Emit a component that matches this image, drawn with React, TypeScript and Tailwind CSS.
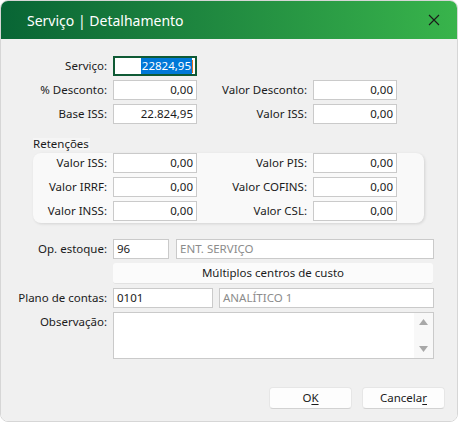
import React from 'react';

const font = { fontFamily: '"Noto Sans", "Open Sans", sans-serif' };

function Input({ value, className = '', muted = false, align = 'right' }: { value: string; className?: string; muted?: boolean; align?: 'left' | 'right' }) {
  return (
    <div
      className={`h-[20px] bg-white border border-[#cacaca] flex items-center px-[3px] text-[11.5px] leading-none ${
        align === 'right' ? 'justify-end' : 'justify-start'
      } ${muted ? 'text-[#8c8c8c]' : 'text-[#1b1b1b]'} ${className}`}
    >
      {value}
    </div>
  );
}

function Label({ text, className = '' }: { text: string; className?: string }) {
  return <div className={`text-right pr-[6px] text-[11.5px] text-[#1b1b1b] whitespace-nowrap ${className}`}>{text}</div>;
}

function Pair({ label, value, rightLabel, rightValue, leftWidth = 'w-[112px]' }: { label: string; value: string; rightLabel?: string; rightValue?: string; leftWidth?: string }) {
  return (
    <div className="flex items-center h-[20px]">
      <Label text={label} className={leftWidth} />
      <Input value={value} className="w-[84px]" />
      {rightLabel && (
        <>
          <Label text={rightLabel} className="w-[116px]" />
          <Input value={rightValue || ''} className="w-[84px]" />
        </>
      )}
    </div>
  );
}

export default function App() {
  return (
    <div className="w-[459px] h-[423px] bg-white" style={font}>
      <div className="w-[458px] h-[422px] rounded-lg overflow-hidden flex flex-col border border-[#d6d6d6]">
        {/* Title bar */}
        <div className="h-[38px] flex items-center justify-between bg-gradient-to-r from-[#086535] to-[#38b44b] pl-[26px] pr-[17px]">
          <span className="text-white text-[14px]">Serviço | Detalhamento</span>
          <svg width="12" height="12" viewBox="0 0 12 12">
            <path d="M1 1 L11 11 M11 1 L1 11" stroke="#1a1a1a" strokeWidth="1.1" />
          </svg>
        </div>

        {/* Body */}
        <div className="flex-1 bg-[#f0f0f0] pt-[17px] flex flex-col">
          {/* Top values */}
          <div className="flex flex-col gap-[4px]">
            <div className="flex items-center h-[20px]">
              <Label text="Serviço:" className="w-[112px]" />
              <div className="w-[84px] h-[20px] bg-white border-2 border-[#0f5a35] flex items-center justify-end pr-[2px] text-[11.5px] leading-none">
                <span className="bg-[#0078d7] text-white px-[1px] py-[2px]">22824,95</span>
                <span className="w-[1px] h-[13px] bg-[#e0701f]"></span>
              </div>
            </div>
            <Pair label="% Desconto:" value="0,00" rightLabel="Valor Desconto:" rightValue="0,00" />
            <Pair label="Base ISS:" value="22.824,95" rightLabel="Valor ISS:" rightValue="0,00" />
          </div>

          {/* Retenções */}
          <div className="mt-[14px] ml-[32px] w-fit bg-[#f5f5f5] text-[11.5px] leading-[12px] text-[#1b1b1b] pr-[1px]">Retenções</div>
          <div className="mt-[3px] ml-[32px] w-[391px] h-[70px] bg-[#f9f9f9] rounded-lg shadow-[1px_1px_3px_rgba(0,0,0,0.12)] flex flex-col gap-[4px]">
            <Pair label="Valor ISS:" value="0,00" rightLabel="Valor PIS:" rightValue="0,00" leftWidth="w-[80px]" />
            <Pair label="Valor IRRF:" value="0,00" rightLabel="Valor COFINS:" rightValue="0,00" leftWidth="w-[80px]" />
            <Pair label="Valor INSS:" value="0,00" rightLabel="Valor CSL:" rightValue="0,00" leftWidth="w-[80px]" />
          </div>

          {/* Lower section */}
          <div className="mt-[16px] flex flex-col gap-[4px]">
            <div className="flex items-center h-[20px]">
              <Label text="Op. estoque:" className="w-[112px]" />
              <Input value="96" className="w-[56px]" align="left" />
              <Input value="ENT. SERVIÇO" className="w-[258px] ml-[7px]" muted align="left" />
            </div>
            <div className="flex">
              <div className="w-[112px]" />
              <div className="w-[320px] h-[21px] bg-[#fbfbfb] rounded-[3px] border-b border-[#e2e2e2] flex items-center justify-center text-[11.5px] text-[#1b1b1b]">
                Múltiplos centros de custo
              </div>
            </div>
            <div className="flex items-center h-[20px]">
              <Label text="Plano de contas:" className="w-[112px]" />
              <Input value="0101" className="w-[100px]" align="left" />
              <Input value="ANALÍTICO 1" className="w-[215px] ml-[6px]" muted align="left" />
            </div>
            <div className="flex">
              <Label text="Observação:" className="w-[112px] pt-[1px]" />
              <div className="w-[321px] h-[47px] bg-white border border-[#cacaca] flex justify-end">
                <div className="w-[19px] bg-[#f8f8f8] flex flex-col items-center justify-between py-[6px]">
                  <svg width="9" height="6" viewBox="0 0 9 6"><path d="M0 6 L4.5 0 L9 6 Z" fill="#a8a8a8" /></svg>
                  <svg width="9" height="6" viewBox="0 0 9 6"><path d="M0 0 L4.5 6 L9 0 Z" fill="#a8a8a8" /></svg>
                </div>
              </div>
            </div>
          </div>

          {/* Buttons */}
          <div className="mt-[28px] flex justify-end gap-[10px] pr-[12px]">
            <button className="w-[83px] h-[22px] bg-[#fdfdfd] rounded-[4px] border border-[#e6e6e6] border-b-[#d2d2d2] text-[11.5px] text-[#1b1b1b] flex items-center justify-center">
              O<span className="underline underline-offset-2">K</span>
            </button>
            <button className="w-[83px] h-[22px] bg-[#fdfdfd] rounded-[4px] border border-[#e6e6e6] border-b-[#d2d2d2] text-[11.5px] text-[#1b1b1b] flex items-center justify-center">
              Cancela<span className="underline underline-offset-2">r</span>
            </button>
          </div>
        </div>
      </div>
    </div>
  );
}
